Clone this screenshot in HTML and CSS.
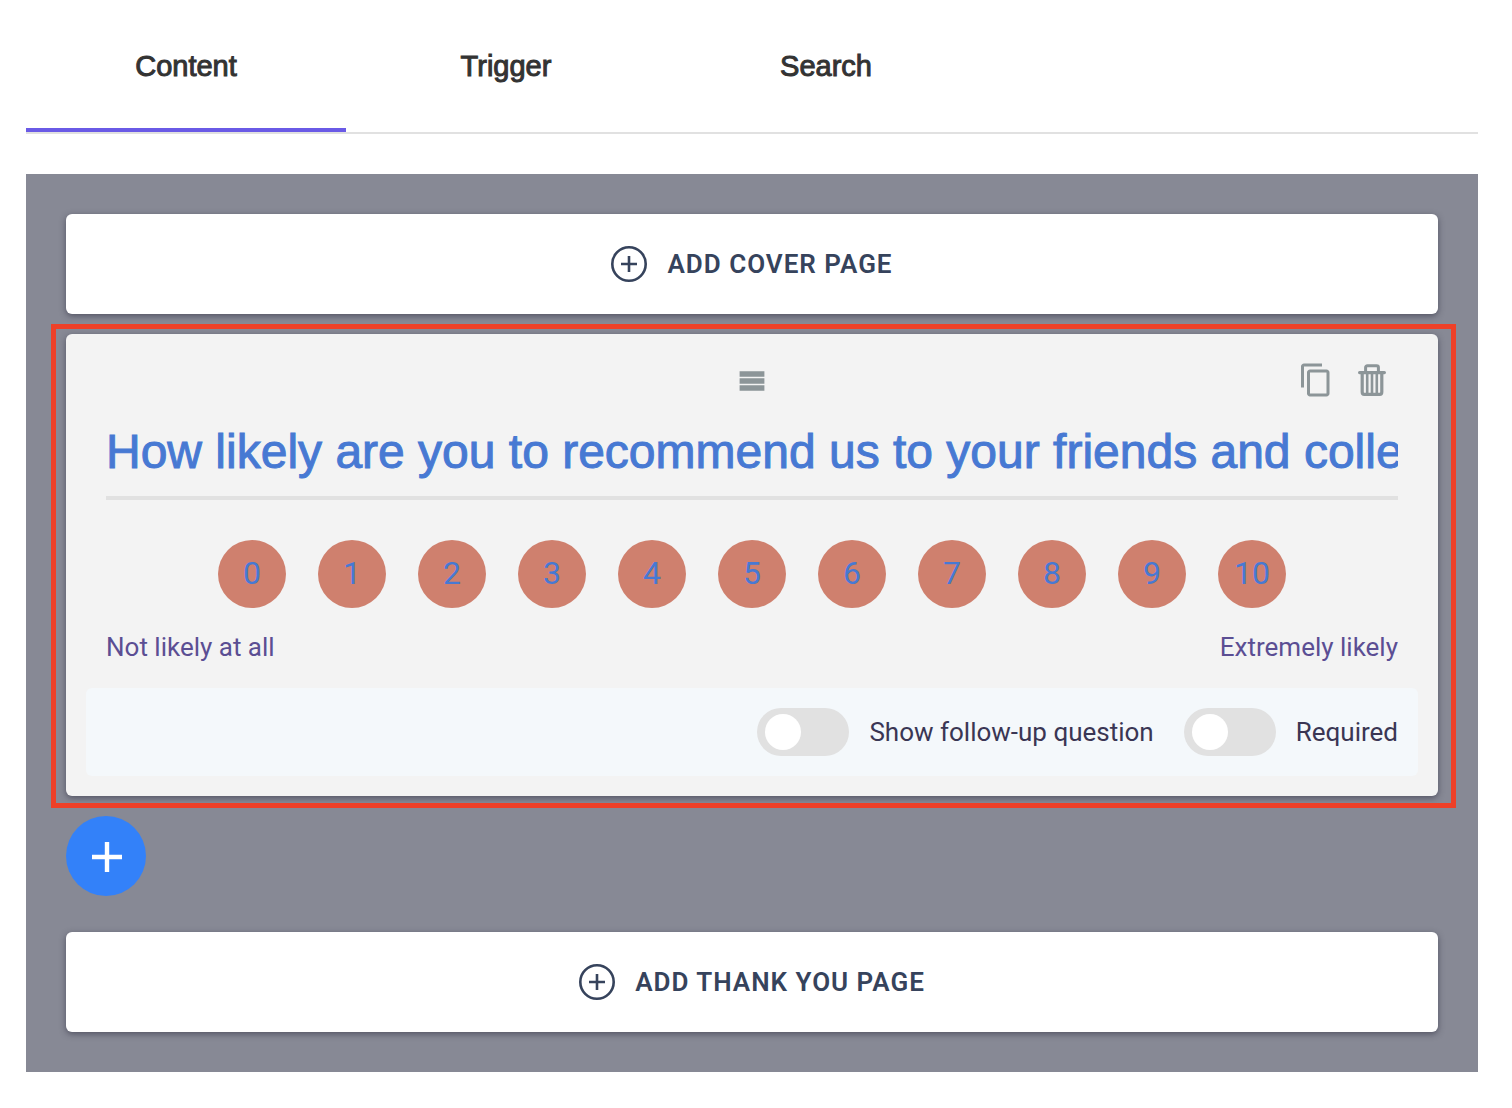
FILE: index.html
```html
<!DOCTYPE html>
<html lang="en">

<head>
  <meta charset="UTF-8">
  <meta name="viewport" content="width=device-width, initial-scale=1.0">
  <title>Survey editor</title>
  <link rel="stylesheet" href="styles.css">
</head>

<body>
  <nav class="tabs">
    <a class="tab active" href="#content">Content</a>
    <a class="tab" href="#trigger">Trigger</a>
    <a class="tab" href="#search">Search</a>
  </nav>

  <main class="editor" id="content">
    <button class="add-page" type="button">
      <svg width="36" height="36" viewBox="0 0 36 36" fill="none" stroke="currentColor">
        <circle cx="18" cy="18" r="16.7" stroke-width="2.6"/>
        <path d="M18 10v16M10 18h16" stroke-width="2.6"/>
      </svg>
      Add cover page
    </button>

    <section class="question">
      <div class="question-header">
        <button class="icon-btn drag" type="button" aria-label="Move question">
          <svg width="26" height="22" viewBox="0 0 26 22" fill="currentColor">
            <path d="M.6 2.3h24.8v5.4H.6zM.6 9.2h24.8v5.6H.6zM.6 16.3h24.8v5.4H.6z"/>
          </svg>
        </button>
        <div class="actions">
          <button class="icon-btn" type="button" aria-label="Copy question">
            <svg width="36" height="36" viewBox="0 0 24 24" fill="currentColor">
              <path d="M16 1H4c-1.1 0-2 .9-2 2v14h2V3h12V1zm3 4H8c-1.1 0-2 .9-2 2v14c0 1.1.9 2 2 2h11c1.1 0 2-.9 2-2V7c0-1.1-.9-2-2-2zm0 16H8V7h11v14z"/>
            </svg>
          </button>
          <button class="icon-btn" type="button" aria-label="Delete question">
            <svg width="28" height="32" viewBox="0 0 28 32" fill="none" stroke="currentColor">
              <path d="M7.600 8V3.500Q7.600 1.800 9.400 1.800h9.200Q20.400 1.800 20.400 3.500V8" stroke-width="3"/>
              <path d="M1.600 8.600h24.800" stroke-width="3.200" stroke-linecap="round"/>
              <path d="M4.200 9v19Q4.200 30.300 6.200 30.300h15.600Q23.800 30.300 23.800 28V9" stroke-width="3.200"/>
              <path d="M9.200 10v19M14 10v19M18.800 10v19" stroke-width="2.600"/>
            </svg>
          </button>
        </div>
      </div>

      <div class="question-body">
        <input class="question-title" type="text" aria-label="Question" value="How likely are you to recommend us to your friends and colleagues?">
        <div class="scores">
          <button class="score" type="button">0</button>
          <button class="score" type="button">1</button>
          <button class="score" type="button">2</button>
          <button class="score" type="button">3</button>
          <button class="score" type="button">4</button>
          <button class="score" type="button">5</button>
          <button class="score" type="button">6</button>
          <button class="score" type="button">7</button>
          <button class="score" type="button">8</button>
          <button class="score" type="button">9</button>
          <button class="score" type="button">10</button>
        </div>
        <div class="score-labels">
          <span>Not likely at all</span>
          <span>Extremely likely</span>
        </div>
      </div>

      <div class="question-footer">
        <label class="switch">
          <input type="checkbox">
          Show follow-up question
        </label>
        <label class="switch">
          <input type="checkbox">
          Required
        </label>
      </div>
    </section>

    <button class="add-question" type="button" aria-label="Add question">
      <svg width="32" height="32" viewBox="0 0 32 32" stroke="currentColor" stroke-width="4.4">
        <path d="M17 2v30M2 17h30"/>
      </svg>
    </button>

    <button class="add-page" type="button">
      <svg width="36" height="36" viewBox="0 0 36 36" fill="none" stroke="currentColor">
        <circle cx="18" cy="18" r="16.7" stroke-width="2.6"/>
        <path d="M18 10v16M10 18h16" stroke-width="2.6"/>
      </svg>
      Add thank you page
    </button>
  </main>
</body>

</html>
```
FILE: styles.css
```css
*{
  box-sizing: border-box;
}
body{
  margin:0;
  padding:0 34px 36px 26px;
  background-color:#fff;
  font-family: Roboto, sans-serif;
  font-size:26px;
  line-height:32px;
}
button{
  padding:0;
  border:0;
  font-family: inherit;
  cursor: pointer;
}
svg{
  display: block;
  flex-shrink: 0;
}

/* tabs */
.tabs{
  display: flex;
  border-bottom:2px solid #e1e1e1;
}
.tab{
  width:320px;
  padding:50px 0 46px;
  border-bottom:4px solid transparent;
  color:#333;
  font-family: "Liberation Sans", Arial, sans-serif;
  font-size:29px;
  text-align: center;
  text-decoration: none;
  -webkit-text-stroke:1px #333;
}
.tab.active{
  border-bottom-color:#6a5ae6;
}

/* editor */
.editor{
  display: flex;
  flex-direction: column;
  margin-top:40px;
  padding:40px;
  background-color:#878995;
}
.add-page,
.question{
  border-radius:6px;
  box-shadow:0 2px 6px rgba(30,30,50,.5);
}
.add-page{
  display: flex;
  align-items: center;
  justify-content: center;
  gap:20px;
  height:100px;
  background-color:#fff;
  color:#36435c;
  font-size:26px;
  font-weight:600;
  letter-spacing:1px;
  text-transform: uppercase;
}

/* question card */
.question{
  position: relative;
  margin:20px 0;
  padding:20px;
  background-color:#f3f3f3;
}
.question::after{
  content:"";
  position: absolute;
  top:-10px;
  right:-18px;
  bottom:-12px;
  left:-15px;
  border:5px solid #ee4028;
  pointer-events: none;
}
.question-header{
  display: grid;
  grid-template-columns:1fr auto 1fr;
  align-items: center;
  height:52px;
  padding:0 28px;
}
.drag{
  grid-column:2;
}
.actions{
  display: flex;
  justify-content: flex-end;
  gap:20px;
}
.icon-btn{
  display: flex;
  align-items: center;
  justify-content: center;
  width:36px;
  height:36px;
  background: none;
  color:#8c9598;
}
.question-body{
  padding:0 20px;
}
.question-title{
  display: block;
  width:100%;
  height:94px;
  padding:0;
  border:0;
  border-bottom:4px solid #e1e1e1;
  background: none;
  color:#4779d3;
  font-family: "Liberation Sans", Arial, sans-serif;
  font-size:48px;
  -webkit-text-stroke:1px #4779d3;
}
.scores{
  display: flex;
  justify-content: center;
  gap:32px;
  margin-top:40px;
}
.score{
  width:68px;
  height:68px;
  padding-bottom:2px;
  border-radius:50%;
  background-color:#cf806e;
  color:#4779d3;
  font-size:32px;
}
.score-labels{
  display: flex;
  justify-content: space-between;
  padding:23px 0 25px;
  color:#5b4e93;
}
.question-footer{
  display: flex;
  justify-content: flex-end;
  gap:30px;
  padding:20px;
  border-radius:6px;
  background-color:#f4f8fb;
  color:#3a3654;
}
.switch{
  display: flex;
  align-items: center;
  gap:20px;
}
.switch input{
  appearance: none;
  width:92px;
  height:48px;
  margin:0;
  padding:6px 8px;
  border-radius:24px;
  background-color:#e1e1e1;
}
.switch input::before{
  content:"";
  display: block;
  width:36px;
  height:36px;
  border-radius:50%;
  background-color:#fff;
}
.switch input:checked{
  padding-left:48px;
  background-color:#6a5ae6;
}

.add-question{
  display: flex;
  align-items: center;
  justify-content: center;
  width:80px;
  height:80px;
  margin-bottom:36px;
  border-radius:50%;
  background-color:#3381f9;
  color:#fff;
}
```
